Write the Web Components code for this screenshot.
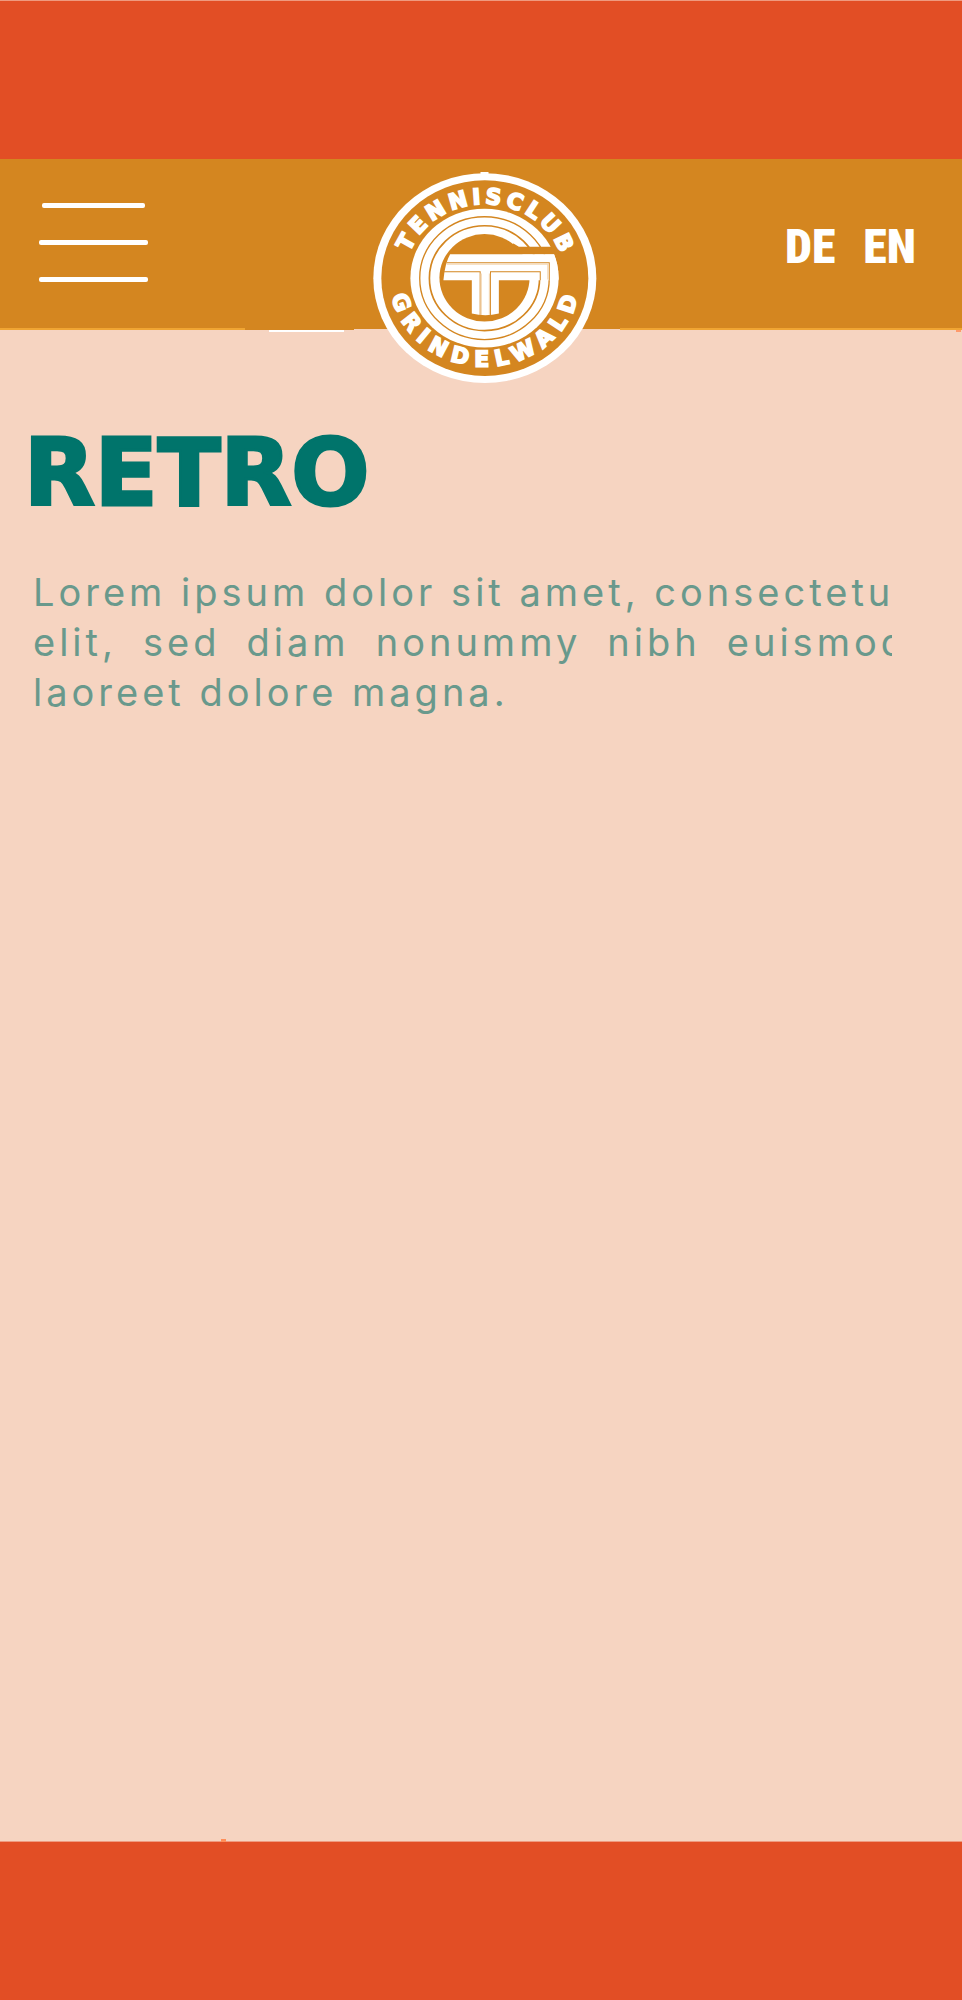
<!DOCTYPE html>
<html lang="en">
<head>
<meta charset="utf-8">
<meta name="viewport" content="width=device-width, initial-scale=1">
<title>Tennisclub Grindelwald – Retro</title>
<style>
  html, body { margin: 0; }
  body { background: #f6d4c1; font-family: Inter, "Liberation Sans", sans-serif; }
</style>
</head>
<body>
<tcg-page>
  <tcg-header slot="header">
    <tcg-menu-button></tcg-menu-button>
    <tcg-logo slot="logo"></tcg-logo>
    <tcg-languages slot="languages"></tcg-languages>
  </tcg-header>
  <tcg-article>
    <span slot="title">RETRO</span>
    <tcg-line>Lorem ipsum dolor sit amet, consectetu</tcg-line>
    <tcg-line justified>elit, sed diam nonummy nibh euismod</tcg-line>
    <tcg-line>laoreet dolore magna.</tcg-line>
  </tcg-article>
</tcg-page>

<script>
class Base extends HTMLElement {
  constructor() {
    super();
    this.attachShadow({ mode: "open" }).innerHTML = this.constructor.markup;
  }
}

customElements.define("tcg-page", class extends Base {
  static markup = `
    <style>
      :host { display: flex; flex-direction: column; min-height: 100vh; }
      .band { height: 158px; background: #e24e25; border-top: 1px solid #ef9a7f; }
      main { flex: 1; }
      footer { position: relative; }
      footer::before { content: ""; position: absolute; left: 23%; top: -3px; width: 5px; height: 3px; background: #ff8f5a; }
    </style>
    <div class="band"></div>
    <slot name="header"></slot>
    <main><slot></slot></main>
    <footer class="band"></footer>`;
});

customElements.define("tcg-header", class extends Base {
  static markup = `
    <style>
      :host { display: block; }
      header {
        position: relative; box-sizing: border-box; height: 171px; padding: 0 32px 0 39px;
        display: grid; grid-template-columns: 1fr 224px 1fr; align-items: start;
        background:
          linear-gradient(90deg, #f0a533 245px, #d48620 245px 354px, #f6d4c1 354px 620px, #f0a533 620px) bottom / 100% 1px no-repeat,
          linear-gradient(90deg, #f0a533 245px, #d48620 245px 620px, #f0a533 620px) bottom / 100% 2px no-repeat,
          #d48620;
      }
      header::after { content: ""; position: absolute; left: 28%; top: 100%; width: 75px; height: 2px; background: #fff; }
      header::before { content: ""; position: absolute; right: 1px; top: 100%; width: 5px; height: 2px; background: #ff9a6c; }
    </style>
    <header>
      <slot></slot>
      <slot name="logo"></slot>
      <slot name="languages"></slot>
    </header>`;
});

customElements.define("tcg-menu-button", class extends Base {
  static markup = `
    <style>
      :host { display: block; }
      button {
        display: flex; flex-direction: column; align-items: center; gap: 32px;
        width: 109px; margin: 44px 0 0; padding: 0; border: 0; background: none; cursor: pointer;
      }
      i { width: 100%; height: 5px; border-radius: 2px; background: #fff; }
      i:first-child { width: 103px; }
    </style>
    <button type="button" aria-label="Menu"><i></i><i></i><i></i></button>`;
});

customElements.define("tcg-languages", class extends Base {
  static markup = `
    <style>
      :host { display: block; }
      nav { display: flex; justify-content: flex-end; gap: 28px; padding: 56px 14px 0 0; }
      a { color: #fff; text-decoration: none; font: 900 48px/64px "Roboto Condensed", Roboto, sans-serif; }
    </style>
    <nav aria-label="Language"><a href="#de">DE</a><a href="#en">EN</a></nav>`;
});

customElements.define("tcg-logo", class extends Base {
  static markup = `
    <style>
      :host { display: block; height: 158px; margin-top: 13px; position: relative; z-index: 1; }
      svg { display: block; width: 224px; height: 211px; }
      text { font: bold 66px "DejaVu Sans", sans-serif; fill: #fff; stroke: #fff; stroke-width: 5; }
    </style>
    <svg viewBox="42 36 669 632" role="img" aria-label="Tennisclub Grindelwald">
      <defs>
        <path id="top" d="M136 354 A240 222 0 0 1 616 354"/>
        <path id="bottom" d="M90 350 A286 269 0 0 0 662 350"/>
        <clipPath id="disc"><ellipse cx="375" cy="354" rx="222" ry="208"/></clipPath>
      </defs>
      <ellipse cx="376" cy="354" rx="334" ry="314" fill="#fff"/>
      <rect x="363" y="36" width="24" height="8" fill="#fff"/>
      <ellipse cx="376" cy="354" rx="310" ry="293" fill="#d48620"/>
      <ellipse cx="375" cy="354" rx="222" ry="208" fill="#fff"/>
      <ellipse cx="375" cy="354" rx="194" ry="184" fill="none" stroke="#d48620" stroke-width="4"/>
      <ellipse cx="375" cy="354" rx="165" ry="157" fill="none" stroke="#d48620" stroke-width="5"/>
      <ellipse cx="375" cy="353" rx="135" ry="131" fill="#d48620"/>
      <path d="M462 250 L478 260 H610 V283 H400Z" fill="#d48620"/>
      <g clip-path="url(#disc)">
        <path d="M272 282H600V360H252Q256 310 272 282Z" fill="#fff"/>
        <path d="M337 355V460Q378 470 418 460V355Z" fill="#fff"/>
        <path d="M262 308H569V360M254 335H362V464M393 464V335H542V360" fill="none" stroke="#d48620" stroke-width="3"/>
        <path d="M262 312H565V358M365 340V464M390 464V340" fill="none" stroke="#f3d7b4" stroke-width="4"/>
      </g>
      <text letter-spacing="12" text-anchor="middle"><textPath href="#top" startOffset="51%">TENNISCLUB</textPath></text>
      <text letter-spacing="21" text-anchor="middle"><textPath href="#bottom" startOffset="51%">GRINDELWALD</textPath></text>
    </svg>`;
});

customElements.define("tcg-article", class extends Base {
  static markup = `
    <style>
      :host { display: block; padding: 96px 70px 0 24px; }
      h1 { margin: 0; font: bold 92px/96px "DejaVu Sans", sans-serif; color: #00746b; -webkit-text-stroke: 3px #00746b; }
      .text { padding: 45px 0 0 9px; overflow: hidden; }
    </style>
    <h1><slot name="title"></slot></h1>
    <div class="text"><slot></slot></div>`;
});

customElements.define("tcg-line", class extends Base {
  static markup = `
    <style>
      :host { display: block; white-space: nowrap; font-size: 38px; line-height: 50px; letter-spacing: 4px; color: #69998c; }
      :host([justified]) { margin-right: -16px; text-align-last: justify; }
    </style>
    <slot></slot>`;
});
</script>
</body>
</html>
